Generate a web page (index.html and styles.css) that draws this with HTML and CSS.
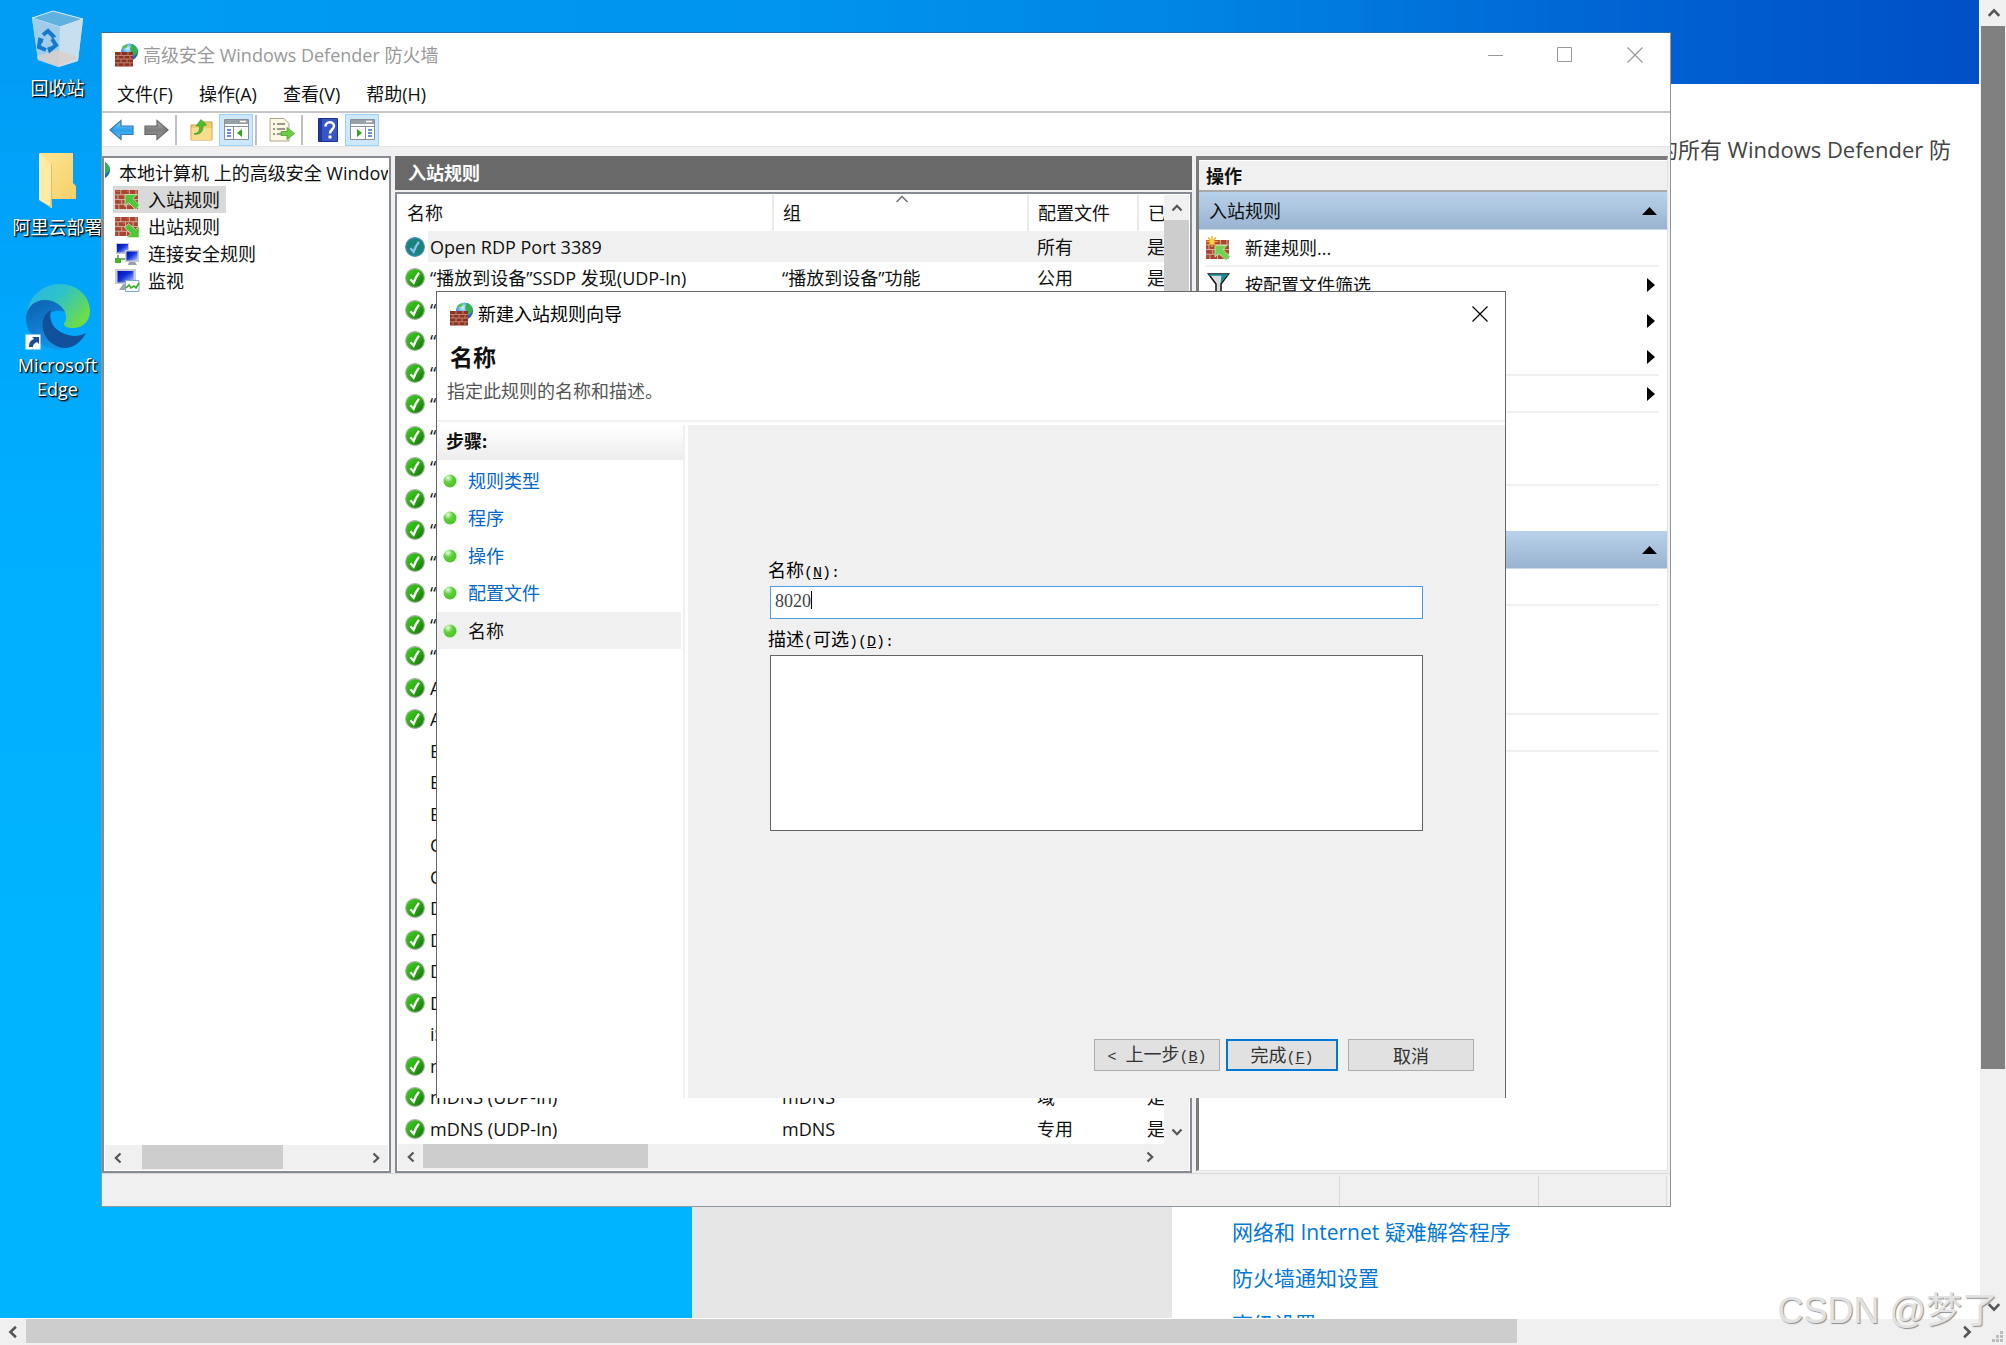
FILE: index.html
```html
<!DOCTYPE html>
<html lang="zh-CN">
<head>
<meta charset="utf-8">
<title>高级安全 Windows Defender 防火墙</title>
<link rel="stylesheet" href="styles.css">
</head>
<body>
<svg class="defs" width="0" height="0" aria-hidden="true">
  <defs>
    <linearGradient id="g-green" x1="0" y1="0" x2="1" y2="1"><stop offset="0" stop-color="#3ed321"/><stop offset=".5" stop-color="#2cab14"/><stop offset="1" stop-color="#0d6a05"/></linearGradient>
    <radialGradient id="g-globe" cx=".4" cy=".3" r=".8"><stop offset="0" stop-color="#d8f4ff"/><stop offset=".4" stop-color="#4aa5ea"/><stop offset="1" stop-color="#0a3fa8"/></radialGradient>
    <radialGradient id="g-dot" cx=".35" cy=".25" r=".8"><stop offset="0" stop-color="#e8ffe0"/><stop offset=".45" stop-color="#5fd03a"/><stop offset="1" stop-color="#4cc22a"/></radialGradient>
    <linearGradient id="g-blue" x1="0" y1="0" x2="0" y2="1"><stop offset="0" stop-color="#8fd4f8"/><stop offset=".5" stop-color="#2ba0ea"/><stop offset="1" stop-color="#5cc0f4"/></linearGradient>
    <linearGradient id="g-gray" x1="0" y1="0" x2="0" y2="1"><stop offset="0" stop-color="#b4b4b4"/><stop offset=".5" stop-color="#7c7c7c"/><stop offset="1" stop-color="#9a9a9a"/></linearGradient>
    <linearGradient id="g-screen" x1="0" y1="0" x2="1" y2="1"><stop offset="0" stop-color="#0010b0"/><stop offset=".45" stop-color="#1030d8"/><stop offset="1" stop-color="#b8d0ff"/></linearGradient>
    <linearGradient id="g-folder" x1="0" y1="0" x2="1" y2="1"><stop offset="0" stop-color="#ffe594"/><stop offset="1" stop-color="#f5cf68"/></linearGradient>
    <linearGradient id="g-e1" x1="0" y1="0" x2="1" y2=".6"><stop offset="0" stop-color="#2fb4ea"/><stop offset=".5" stop-color="#2cc3c8"/><stop offset="1" stop-color="#6ddc4a"/></linearGradient>
    <linearGradient id="g-e2" x1="0" y1="0" x2=".4" y2="1"><stop offset="0" stop-color="#0c5fae"/><stop offset="1" stop-color="#1490e4"/></linearGradient>
    <symbol id="check" viewBox="0 0 20 20"><circle cx="10" cy="10" r="9.4" fill="url(#g-green)" stroke="#a9b0a6" stroke-width="1.1"/><path d="M5.4 11.2 8.6 14.8C10 10.800 11.600 7.800 14 4.800" fill="none" stroke="#fff" stroke-width="2.300"/></symbol>
    <symbol id="check-sel" viewBox="0 0 20 20"><circle cx="10" cy="10" r="9.4" fill="#1b837c" stroke="#4d8fc0" stroke-width="1.1"/><path d="M5.4 11.2 8.6 14.8C10 10.800 11.600 7.800 14 4.800" fill="none" stroke="#86c2ee" stroke-width="2.300"/></symbol>
    <symbol id="bricks" viewBox="0 0 24 20"><path fill="#a8452f" d="M0 0h24v20H0z"/><path d="M0 5h24M0 10h24M0 15h24M6 0v5M15 0v5M22 0v5M3 5v5M11 5v5M19 5v5M7 10v5M15 10v5M4 15v5M12 15v5M20 15v5" stroke="#d9b3a3" stroke-width="1" fill="none"/><path d="M1 1.500h4M8 6.500h3M12 1.500h2M4 11.500h3M13 16.500h3" stroke="#c96b50" fill="none"/></symbol>
    <symbol id="firewall" viewBox="0 0 24 24"><circle cx="14.500" cy="9" r="8.600" fill="url(#g-globe)"/><path d="M17 1c3 1 5 3 5.800 7.500-1 2-3 4.500-5 3.500s-1-3-2-4-.5-4 1.200-7z" fill="#35b04a"/><path d="M7 4c2-2 4-2.500 6-2.500l-1 3-4 1z" fill="#57c25c"/><path fill="#8a3322" d="M0 9h18v14.500H0z"/><path d="M0 12.500h18M0 16h18M0 19.800h18M6 9v3.500M13 9v3.500M3 12.500V16M9 12.500V16M15 12.500V16M6 16v3.800M12 16v3.800M3 19.800v3.700M9 19.800v3.700M15 19.800v3.700" stroke="#c98a75" stroke-width=".9" fill="none"/></symbol>
    <symbol id="in" viewBox="0 0 25 22"><use href="#bricks" x="0" y="1" width="23" height="19"/><path d="M10 5.500h12l-4 4 6.500 6.500-4 4.500-7-7-3.500 4z" fill="#52c437" stroke="#d7f2cf" stroke-width=".7"/></symbol>
    <symbol id="out" viewBox="0 0 25 22"><use href="#bricks" x="0" y="1" width="23" height="19"/><path d="M24 21.500H12l4-4-6.500-5.500 4-4.500 7 6 3.500-3.500z" fill="#52c437" stroke="#d7f2cf" stroke-width=".7"/></symbol>
    <symbol id="conn" viewBox="0 0 25 24"><path d="M1 1h13v11H1z" fill="#c9cdd2"/><path d="M2 2h11v8.500H2z" fill="url(#g-screen)"/><path d="M10 8h14v12H10z" fill="#c9cdd2"/><path d="M11.500 9.500h11v9h-11z" fill="url(#g-screen)"/><path d="M14 20h6l2 3h-9z" fill="#9ba0a5"/><path d="M3 13v4h7" fill="none" stroke="#777" stroke-width="1.500"/><path d="M0 16h6v5H0z" fill="#43b52c"/></symbol>
    <symbol id="mon" viewBox="0 0 25 24"><path d="M0 0h21v15H0z" fill="#c9cdd2"/><path d="M2.500 2h16v11.500h-16z" fill="url(#g-screen)"/><path d="M8 15h5v4h3v2H4z" fill="#a2a7ac"/><path d="M10.500 11.500h13.500v11H10.500z" fill="#fff" stroke="#7fa6cf"/><path d="M11 19l3-3 2 3 3-2 2 2 3-5" fill="none" stroke="#3aa82a" stroke-width="1.600"/></symbol>
    <symbol id="newrule" viewBox="0 0 25 24"><use href="#bricks" x="0" y="4" width="23" height="19"/><path d="M9 9.500h12l-4 4 7 7-4 4-7-7-4 3.500z" fill="#6fd350" stroke="#d7f2cf" stroke-width=".7"/><path d="M6 0v11M.5 5.500h11M2 1.500l8 8M10 1.500l-8 8" stroke="#f5a623" stroke-width="1.400"/><circle cx="6" cy="5.500" r="2.600" fill="#ffcf4a"/></symbol>
    <symbol id="funnel" viewBox="0 0 22 24"><path d="M1 1h20l-7.500 10v10l-5 2V11z" fill="#d9dcdc" stroke="#111" stroke-width="1.500"/><path d="M14 2h5.500L13 10.500z" fill="#0c8f96"/><path d="M1.500 2h19" stroke="#0c8f96" stroke-width="1.500"/></symbol>
    <symbol id="cleft" viewBox="0 0 12 12"><path d="M8.500 1.500 3.800 6l4.700 4.500" fill="none" stroke="#555" stroke-width="2.200"/></symbol>
    <symbol id="cright" viewBox="0 0 12 12"><path d="M3.500 1.500 8.200 6l-4.700 4.500" fill="none" stroke="#555" stroke-width="2.200"/></symbol>
    <symbol id="cup" viewBox="0 0 12 12"><path d="M1.500 8.500 6 3.800l4.500 4.700" fill="none" stroke="#555" stroke-width="2.200"/></symbol>
    <symbol id="cdown" viewBox="0 0 12 12"><path d="M1.500 3.500 6 8.200l4.500-4.700" fill="none" stroke="#555" stroke-width="2.200"/></symbol>
    <symbol id="close" viewBox="0 0 16 16"><path d="M.5.500l15 15M15.500.500l-15 15" fill="none" stroke="currentColor" stroke-width="1.200"/></symbol>
    <symbol id="tri-up" viewBox="0 0 15 8"><path d="M7.500 0 15 8H0z"/></symbol>
    <symbol id="tri-right" viewBox="0 0 8 14"><path d="M0 0l8 7-8 7z"/></symbol>
    <symbol id="dot" viewBox="0 0 14 14"><circle cx="7" cy="7" r="6.500" fill="url(#g-dot)"/></symbol>
  </defs>
</svg>

<div class="viewer">
  <main class="desktop">
    <section class="settings">
      <div class="settings-nav"></div>
      <div class="settings-main">
        <p class="settings-note">的所有 Windows Defender 防</p>
        <nav class="settings-links">
          <a href="#net">网络和 Internet 疑难解答程序</a>
          <a href="#notify">防火墙通知设置</a>
          <a href="#advanced">高级设置</a>
        </nav>
      </div>
    </section>

    <ul class="shortcuts">
      <li>
        <svg width="54" height="60" viewBox="0 0 54 60"><path d="M1 8 22 1l30 8-5 42-20 6-20-7z" fill="#b9d9ee"/><path d="M1 8 22 1l30 8-23 8z" fill="#5fb2df" stroke="#d6ecf8"/><path d="M1 8l28 9-1 40-21-7z" fill="#9fcde9"/><path d="M29 17 52 9l-5 42-19 6z" fill="#c7dfee"/><path d="M6 46l20-6 21 7-19 9.500-21-7z" fill="#dccfcb" opacity=".8"/><path d="M12 25l5-4 5 5-2 1M21 29l4 6-6 5-1-3M15 40l-7-3 1-7 3 1" fill="none" stroke="#1478cf" stroke-width="4"/></svg>
        <span>回收站</span>
      </li>
      <li>
        <svg width="38" height="56" viewBox="0 0 38 56"><path d="M1 0h33v30l3 3v13H1z" fill="url(#g-folder)"/><path d="M0 0l12 11v28l1 16L0 47z" fill="#ffeaa6"/><path d="M12.500 11v32l-1 12" fill="none" stroke="#e3bd58"/></svg>
        <span>阿里云部署</span>
      </li>
      <li>
        <svg width="66" height="66" viewBox="0 0 66 66"><path d="M1 33C3 12 18 0 35 0c18 0 30 13 30 27 0 11-8 17-17 17-5 0-9-1-9-4 0-2 3-3 2-8-1-8-9-15-20-15C10 17 3 24 1 33z" fill="url(#g-e1)"/><path d="M1 34c0-10 8-18 19-18 10 0 17 6 20 12-14-5-23 6-19 18 3 11 11 18 20 19-22 3-40-12-40-31z" fill="url(#g-e2)"/><path d="M26 26c-12 6-11 26 2 34 11 8 25 4 33-11-9 5-20 3-27-2-8-5-10-14-8-21z" fill="#11509a"/><path d="M.5 50.500h15v15H.5z" fill="#fff"/><path d="M4 63c0-5 2-7 5-8l-2-2h7v7l-2-2c-3 1-4 3-4 5z" fill="#1c4f91"/></svg>
        <span>Microsoft<br>Edge</span>
      </li>
    </ul>

    <section class="window">
      <header class="titlebar">
        <svg width="24" height="24"><use href="#firewall"/></svg>
        <h1>高级安全 Windows Defender 防火墙</h1>
        <button class="winbtn" aria-label="最小化"><svg width="16" height="16"><path d="M1 8.500h15" stroke="#999"/></svg></button>
        <button class="winbtn" aria-label="最大化"><svg width="16" height="16"><path d="M.5.500h14v14H.5z" fill="none" stroke="#999"/></svg></button>
        <button class="winbtn" aria-label="关闭"><svg width="16" height="16"><use href="#close"/></svg></button>
      </header>
      <nav class="menubar">
        <button>文件(F)</button><button>操作(A)</button><button>查看(V)</button><button>帮助(H)</button>
      </nav>
      <div class="toolbar">
        <button aria-label="后退"><svg width="26" height="22" viewBox="0 0 26 22"><path d="M1 11 12 1.500V7h12v8.500H12V20.500z" fill="url(#g-blue)" stroke="#3878b4" stroke-width="1.200"/></svg></button>
        <button aria-label="前进"><svg width="26" height="22" viewBox="0 0 26 22"><path d="M25 11 14 1.500V7H2v8.500h12V20.500z" fill="url(#g-gray)" stroke="#666" stroke-width="1.200"/></svg></button>
        <i></i>
        <button aria-label="向上一级"><svg width="24" height="24" viewBox="0 0 24 24"><path d="M1 7h8l2-3h11v18H1z" fill="#f3cc6b" stroke="#c9a04a"/><path d="M1.500 10h20v12h-20z" fill="#f9dc8c"/><path d="M4 16c5-1 6-4 5.500-8H6l5-6.500L16.500 7 13 8c0 6-3 9-9 8z" fill="#4cc02f" stroke="#2d8a1a" stroke-width=".6"/></svg></button>
        <button class="on" aria-label="显示控制台树"><svg width="25" height="21" viewBox="0 0 25 21"><path d="M.5.500h24v20H.5z" fill="#fff" stroke="#8a8f96"/><path d="M1 1h23v4H1z" fill="#9aa0a8"/><path d="M16 2.500h6" stroke="#fff" stroke-width="1.500"/><path d="M1 7.500h23M9.500 8v12" stroke="#8a8f96"/><path d="M3 11h4M3 14h4M3 17h4" stroke="#3a6ec0" stroke-width="1.500"/><path d="M18 10v8l-5-4z" fill="#2fa51c"/></svg></button>
        <i></i>
        <button aria-label="导出列表"><svg width="26" height="24" viewBox="0 0 26 24"><path d="M1 .5h14l5 5V23H1z" fill="#fdf8e2" stroke="#aaa48c"/><path d="M4 6h2M4 11h2M4 16h2M8 6h8M8 11h8M8 16h6" stroke="#777" stroke-width="1.500"/><path d="M12 13.500h6V9.500l7.500 6-7.500 6v-4h-6z" fill="#6bd048" stroke="#3c9a22" stroke-width=".7"/></svg></button>
        <i></i>
        <button aria-label="帮助"><svg width="20" height="24" viewBox="0 0 20 24"><path d="M.5.500h19v23H.5z" fill="#3556c4" stroke="#1d2f86"/><path d="M1 1h3v22H1z" fill="#1f389c"/><path d="M7.500 8.500C7.500 3 16 3 16 8c0 3.500-4 3.500-4 7.500" fill="none" stroke="#fff" stroke-width="2.500"/><path d="M10.500 17.500h3v3h-3z" fill="#fff"/></svg></button>
        <button class="on" aria-label="显示操作窗格"><svg width="25" height="21" viewBox="0 0 25 21"><path d="M.5.500h24v20H.5z" fill="#fff" stroke="#8a8f96"/><path d="M1 1h23v4H1z" fill="#9aa0a8"/><path d="M16 2.500h6" stroke="#fff" stroke-width="1.500"/><path d="M1 7.500h23M15.500 8v12" stroke="#8a8f96"/><path d="M18 11h4M18 14h4M18 17h4" stroke="#3a6ec0" stroke-width="1.500"/><path d="M7 10v8l5-4z" fill="#2fa51c"/></svg></button>
      </div>

      <div class="panes">
        <section class="pane tree">
          <ul>
            <li class="root"><svg width="6" height="24" viewBox="18 0 6 24"><use href="#firewall" width="24" height="24"/></svg><span>本地计算机 上的高级安全 Windows Defender 防火墙</span></li>
            <li class="node sel"><svg width="25" height="22"><use href="#in"/></svg><span>入站规则</span></li>
            <li class="node"><svg width="25" height="22"><use href="#out"/></svg><span>出站规则</span></li>
            <li class="node"><svg width="25" height="24"><use href="#conn"/></svg><span>连接安全规则</span></li>
            <li class="node"><svg width="25" height="24"><use href="#mon"/></svg><span>监视</span></li>
          </ul>
          <div class="hscroll tree-scroll">
            <button aria-label="向左"><svg width="12" height="12"><use href="#cleft"/></svg></button>
            <div class="track"><div class="thumb"></div></div>
            <button aria-label="向右"><svg width="12" height="12"><use href="#cright"/></svg></button>
          </div>
        </section>

        <section class="center">
          <h2 class="darkhead">入站规则</h2>
          <div class="pane list">
            <div class="tablewrap">
              <table>
                <colgroup><col class="c1"><col class="c2"><col class="c3"><col class="c4"></colgroup>
                <thead><tr><th>名称</th><th>组<svg class="sort" width="14" height="8" viewBox="0 0 14 8"><path d="M1.500 7 7 1.500 12.500 7" fill="none" stroke="#777" stroke-width="1.600"/></svg></th><th>配置文件</th><th>已启用</th></tr></thead>
                <tbody>
                  <tr class="sel"><td><svg><use href="#check-sel"/></svg>Open RDP Port 3389</td><td></td><td>所有</td><td>是</td></tr>
                  <tr><td><svg><use href="#check"/></svg>“播放到设备”SSDP 发现(UDP-In)</td><td>“播放到设备”功能</td><td>公用</td><td>是</td></tr>
                  <tr><td><svg><use href="#check"/></svg>“</td><td></td><td></td><td></td></tr>
                  <tr><td><svg><use href="#check"/></svg>“</td><td></td><td></td><td></td></tr>
                  <tr><td><svg><use href="#check"/></svg>“</td><td></td><td></td><td></td></tr>
                  <tr><td><svg><use href="#check"/></svg>“</td><td></td><td></td><td></td></tr>
                  <tr><td><svg><use href="#check"/></svg>“</td><td></td><td></td><td></td></tr>
                  <tr><td><svg><use href="#check"/></svg>“</td><td></td><td></td><td></td></tr>
                  <tr><td><svg><use href="#check"/></svg>“</td><td></td><td></td><td></td></tr>
                  <tr><td><svg><use href="#check"/></svg>“</td><td></td><td></td><td></td></tr>
                  <tr><td><svg><use href="#check"/></svg>“</td><td></td><td></td><td></td></tr>
                  <tr><td><svg><use href="#check"/></svg>“</td><td></td><td></td><td></td></tr>
                  <tr><td><svg><use href="#check"/></svg>“</td><td></td><td></td><td></td></tr>
                  <tr><td><svg><use href="#check"/></svg>“</td><td></td><td></td><td></td></tr>
                  <tr><td><svg><use href="#check"/></svg>A</td><td></td><td></td><td></td></tr>
                  <tr><td><svg><use href="#check"/></svg>A</td><td></td><td></td><td></td></tr>
                  <tr><td><svg></svg>B</td><td></td><td></td><td></td></tr>
                  <tr><td><svg></svg>B</td><td></td><td></td><td></td></tr>
                  <tr><td><svg></svg>B</td><td></td><td></td><td></td></tr>
                  <tr><td><svg></svg>C</td><td></td><td></td><td></td></tr>
                  <tr><td><svg></svg>C</td><td></td><td></td><td></td></tr>
                  <tr><td><svg><use href="#check"/></svg>D</td><td></td><td></td><td></td></tr>
                  <tr><td><svg><use href="#check"/></svg>D</td><td></td><td></td><td></td></tr>
                  <tr><td><svg><use href="#check"/></svg>D</td><td></td><td></td><td></td></tr>
                  <tr><td><svg><use href="#check"/></svg>D</td><td></td><td></td><td></td></tr>
                  <tr><td><svg></svg>iS</td><td></td><td></td><td></td></tr>
                  <tr><td><svg><use href="#check"/></svg>m</td><td></td><td></td><td></td></tr>
                  <tr><td><svg><use href="#check"/></svg>mDNS (UDP-In)</td><td>mDNS</td><td>域</td><td>是</td></tr>
                  <tr><td><svg><use href="#check"/></svg>mDNS (UDP-In)</td><td>mDNS</td><td>专用</td><td>是</td></tr>
                </tbody>
              </table>
            </div>
            <div class="vscroll">
              <button aria-label="向上"><svg width="12" height="12"><use href="#cup"/></svg></button>
              <div class="track"><div class="thumb"></div></div>
              <button aria-label="向下"><svg width="12" height="12"><use href="#cdown"/></svg></button>
            </div>
            <div class="hscroll list-scroll">
              <button aria-label="向左"><svg width="12" height="12"><use href="#cleft"/></svg></button>
              <div class="track"><div class="thumb"></div></div>
              <button aria-label="向右"><svg width="12" height="12"><use href="#cright"/></svg></button>
              <span></span>
            </div>
          </div>
        </section>

        <aside class="actions">
          <h2>操作</h2>
          <h3><span>入站规则</span><svg width="15" height="8"><use href="#tri-up"/></svg></h3>
          <ul>
            <li class="rule"><svg width="25" height="24"><use href="#newrule"/></svg><span>新建规则...</span></li>
            <li><svg width="25" height="24"><use href="#funnel"/></svg><span>按配置文件筛选</span><svg width="8" height="14"><use href="#tri-right"/></svg></li>
            <li><span></span><svg width="8" height="14"><use href="#tri-right"/></svg></li>
            <li class="rule"><span></span><svg width="8" height="14"><use href="#tri-right"/></svg></li>
            <li class="rule"><span></span><svg width="8" height="14"><use href="#tri-right"/></svg></li>
            <li></li>
            <li class="rule"></li>
            <li></li>
          </ul>
          <h3 class="second"><span></span><svg width="15" height="8"><use href="#tri-up"/></svg></h3>
          <ul>
            <li class="rule"></li>
            <li></li>
            <li></li>
            <li class="rule"></li>
            <li class="rule"></li>
          </ul>
        </aside>
      </div>
      <footer class="status"><span></span><span></span><span></span></footer>
    </section>

    <section class="dialog" role="dialog" aria-labelledby="dlg-title">
      <header class="dlg-title">
        <svg width="24" height="24"><use href="#firewall"/></svg>
        <h2 id="dlg-title">新建入站规则向导</h2>
        <button aria-label="关闭"><svg width="16" height="16"><use href="#close"/></svg></button>
      </header>
      <div class="dlg-head">
        <h3>名称</h3>
        <p>指定此规则的名称和描述。</p>
      </div>
      <div class="dlg-body">
        <nav class="steps">
          <h4>步骤:</h4>
          <ol>
            <li><svg width="14" height="14"><use href="#dot"/></svg><a href="#type">规则类型</a></li>
            <li><svg width="14" height="14"><use href="#dot"/></svg><a href="#program">程序</a></li>
            <li><svg width="14" height="14"><use href="#dot"/></svg><a href="#action">操作</a></li>
            <li><svg width="14" height="14"><use href="#dot"/></svg><a href="#profile">配置文件</a></li>
            <li class="current"><svg width="14" height="14"><use href="#dot"/></svg><span>名称</span></li>
          </ol>
        </nav>
        <form class="form">
          <div class="fields">
            <label for="name">名称<kbd>(<u>N</u>):</kbd></label>
            <div class="field"><input id="name" type="text" value="8020"><b class="caret"></b></div>
            <label for="desc">描述<kbd>(</kbd>可选<kbd>)(<u>D</u>):</kbd></label>
            <textarea id="desc"></textarea>
          </div>
          <div class="buttons">
            <button type="button"><kbd>&lt; </kbd>上一步<kbd>(<u>B</u>)</kbd></button>
            <button type="button" class="default">完成<kbd>(<u>F</u>)</kbd></button>
            <button type="button" class="cancel">取消</button>
          </div>
        </form>
      </div>
    </section>
  </main>

  <div class="vscroll outer-v">
    <button aria-label="向上"><svg width="14" height="14"><use href="#cup"/></svg></button>
    <div class="track"><div class="thumb"></div></div>
    <button aria-label="向下"><svg width="14" height="14"><use href="#cdown"/></svg></button>
  </div>
  <div class="hscroll outer-h">
    <button aria-label="向左"><svg width="14" height="14"><use href="#cleft"/></svg></button>
    <div class="track"><div class="thumb"></div></div>
    <button aria-label="向右"><svg width="14" height="14"><use href="#cright"/></svg></button>
  </div>
  <div class="corner"><svg width="12" height="12" viewBox="0 0 12 12"><path d="M8 0h3v3H8zM4 4h3v3H4zM8 4h3v3H8zM0 8h3v3H0zM4 8h3v3H4zM8 8h3v3H8z" fill="#bbb"/></svg></div>
  <div class="watermark">CSDN @梦了</div>
</div>
</body>
</html>
```
FILE: styles.css
```css
* { box-sizing: border-box; }
body, h1, h2, h3, h4, p, ul, ol { margin: 0; padding: 0; }
ul, ol { list-style: none; }
body {
  font: 18px/24px "Open Sans", "Noto Sans CJK SC", sans-serif;
  color: #111;
  overflow: hidden;
}
button, input, textarea { font: inherit; color: inherit; margin: 0; }
button { background: none; border: 0; padding: 0; }
svg { display: block; flex: none; }
.defs { position: absolute; }
a { text-decoration: none; }
kbd { font-family: "Liberation Mono", monospace; font-size: 15px; }

/* remote viewer frame */
.viewer {
  position: relative;
  display: grid;
  grid-template: minmax(0, 1fr) 26px / minmax(0, 1fr) 26px;
  height: 100vh;
}
.desktop {
  position: relative;
  overflow: hidden;
  border-right: 1px solid #fff;
  border-bottom: 1px solid #fff;
  background:
    linear-gradient(to right, #009df4, #0094ee 40%, #0085e4 60%, #0062d2 83%, #004fc6) top / 100% 84px no-repeat,
    linear-gradient(to bottom, #009ef6 84px, #00aeff 40%, #00b4ff 70%);
}

/* scroll bars */
.vscroll, .hscroll { display: flex; background: #f0f0f0; }
.vscroll { flex-direction: column; }
.vscroll button, .hscroll button { display: grid; place-items: center; flex: none; width: 25px; height: 25px; }
.track { flex: 1; }
.thumb { background: #cdcdcd; }
.hscroll .thumb { height: 24px; }
.outer-v { padding-left: 1px; }
.outer-v .thumb { width: 24px; height: calc(83% - 10px); background: #808080; margin-top: 1px; }
.outer-h { padding-right: 1px; }
.outer-h .thumb { width: calc(77% + 6px); margin-left: 1px; }
.corner { background: #f0f0f0; display: grid; place-items: end; padding: 2px; }
.watermark {
  position: absolute;
  right: 8px;
  bottom: 12px;
  font: 36px/44px "Liberation Sans", "Noto Sans CJK SC", sans-serif;
  color: #e2e2e2;
  text-shadow: 1px 1px 1px #8c8c8c;
}

/* settings window in the background */
.settings {
  position: absolute;
  left: 692px;
  right: 0;
  top: 84px;
  bottom: 0;
  display: grid;
  grid-template-columns: 480px 1fr;
  background: #fff;
}
.settings-nav { background: #e6e6e6; }
.settings-main { display: flex; flex-direction: column; justify-content: space-between; padding: 50px 28px 0 60px; }
.settings-note { font-size: 22px; line-height: 30px; text-align: right; color: #444; }
.settings-links { display: grid; font-size: 21px; line-height: 46px; margin-bottom: -29px; }
.settings-links a { color: #0078d7; }

/* desktop icons */
.shortcuts { position: absolute; left: 0; top: 10px; width: 115px; display: grid; gap: 39px; color: #fff; text-align: center; }
.shortcuts li { display: flex; flex-direction: column; align-items: center; justify-content: flex-end; gap: 6px; min-height: 100px; white-space: nowrap; text-shadow: 1px 1px 2px #000, 1px 1px 1px #000; }
.shortcuts li:first-child { min-height: 0; }
.shortcuts li:last-child { gap: 3px; padding-top: 6px; }

/* firewall console */
.window { position: absolute; left: 101px; right: 308px; top: 32px; border: 1px solid #8f979d; border-top-color: #2b6ea4; background: #fff; }
.titlebar { display: flex; align-items: center; height: 43px; padding-left: 13px; gap: 4px; color: #999; }
.titlebar h1 { flex: 1; font-size: 18px; font-weight: 400; line-height: 24px; }
.winbtn { display: grid; place-items: center; width: 70px; height: 43px; margin-left: -4px; }
.menubar { display: flex; gap: 26px; height: 37px; padding: 0 15px; border-bottom: 2px solid #c4c5c8; }
.toolbar { display: flex; align-items: center; height: 34px; padding-left: 3px; border-bottom: 1px solid #e5e5e5; }
.toolbar button { display: grid; place-items: center; width: 34px; height: 32px; }
.toolbar .on { background: #cce8ff; border: 1px solid #99d1ff; }
.toolbar i { width: 2px; height: 30px; margin: 0 8px 0 2px; background: #bfbfbf; }

.panes { display: grid; grid-template-columns: 289px minmax(0, 1fr) 472px; gap: 4px; padding: 9px 2px 0 0; background: #f0f0f0; }
.pane { border: 2px solid #868b93; padding: 1px; background: #fff; }
.tree { display: flex; flex-direction: column; justify-content: space-between; overflow: hidden; }
.tree li { display: flex; align-items: center; height: 27px; white-space: nowrap; }
.root { gap: 8px; overflow: hidden; }
.node { margin-left: 8px; padding: 0 6px 0 2px; gap: 8px; width: max-content; }
.sel.node { background: #d9d9d9; }
.tree-scroll .thumb { width: 141px; margin-left: 12px; }

.center { display: flex; flex-direction: column; gap: 2px; }
.darkhead { height: 34px; padding-left: 13px; background: #696969; color: #fff; font-size: 18px; line-height: 34px; }
.list { display: grid; grid-template-columns: minmax(0, 1fr) 25px; }
.tablewrap { overflow: hidden; }
table { width: 100%; table-layout: fixed; border-collapse: collapse; text-align: left; }
.c1 { width: 375px; }
.c2 { width: 255px; }
.c3 { width: 110px; }
th, td { padding: 0 0 0 9px; font-weight: 400; white-space: nowrap; overflow: hidden; }
th { position: relative; height: 36px; border-right: 2px solid #e9e9e9; }
th:last-child { border-right: 0; }
.sort { position: absolute; left: 121px; top: 0; }
tbody tr { height: 31px; }
tbody tr:nth-child(even) { height: 32px; }
td svg { float: left; width: 20px; height: 20px; margin: 2px 5px 0 -2px; }
tbody .sel { background: linear-gradient(to right, transparent 30px, #f0f0f0 30px); }
.list .vscroll .thumb { height: 500px; }
.list-scroll { grid-column: 1 / -1; height: 26px; }
.list-scroll .thumb { width: 225px; }
.list-scroll span { width: 27px; }

.actions { border: 3px solid #7b7b7b; border-width: 4px 1px 1px 3px; border-right-color: #e3e3e3; border-bottom-color: #e3e3e3; background: #fff; margin-bottom: 2px; }
.actions h2 { height: 32px; padding-left: 7px; border-top: 1px solid #fff; border-bottom: 2px solid #a9a9a9; background: #f0f0f0; font-size: 18px; line-height: 30px; }
.actions h3 { display: flex; align-items: center; justify-content: space-between; height: 38px; padding: 0 10px; border-bottom: 1px solid #c9d8e8; background: linear-gradient(#b9d1ea, #99b4d1); font-size: 18px; font-weight: 400; }
.actions ul { padding: 0 8px 0 7px; }
.actions li { display: flex; align-items: center; gap: 14px; height: 36px; padding-right: 4px; }
.actions li.rule { height: 37px; border-bottom: 2px solid #f0f0f0; }
.actions li span { flex: 1; }
.actions .second { margin-top: 9px; }

.status { display: flex; justify-content: flex-end; height: 33px; padding-top: 2px; border-top: 1px solid #d9d9d9; background: #f0f0f0; }
.status span { border-right: 1px solid #d9d9d9; }
.status span:nth-child(1) { flex: 1; }
.status span:nth-child(2) { width: 199px; }
.status span:nth-child(3) { width: 128px; margin-right: 3px; }

/* new rule wizard */
.dialog { position: absolute; left: 436px; top: 291px; width: 1070px; background: #fff; border: 1px solid #666; border-bottom: 0; }
.dlg-title { display: flex; align-items: center; gap: 4px; height: 44px; padding-left: 13px; color: #000; }
.dlg-title h2 { flex: 1; font-size: 18px; font-weight: 400; }
.dlg-title button { display: grid; place-items: center; width: 51px; height: 44px; }
.dlg-head { height: 86px; padding: 7px 10px; border-bottom: 2px solid #f0f0f0; }
.dlg-head h3 { padding-left: 3px; font-size: 23px; line-height: 28px; }
.dlg-head p { margin-top: 8px; color: #555; }
.dlg-body { display: grid; grid-template-columns: 248px minmax(0, 1fr); gap: 3px; padding-top: 3px; }
.steps { border-right: 2px solid #f0f0f0; }
.steps h4 { height: 35px; padding-left: 9px; background: linear-gradient(#fff, #ededed); font-size: 18px; line-height: 33px; }
.steps ol { padding: 2px 2px 0 0; }
.steps li { display: flex; align-items: center; gap: 11px; height: 37px; padding-left: 6px; }
.steps li:nth-child(even) { height: 38px; }
.steps a { color: #0066cc; }
.steps .current { background: #f0f0f0; }
.form { display: flex; flex-direction: column; justify-content: space-between; min-height: 673px; padding: 133px 31px 27px 82px; background: #f0f0f0; }
.fields { display: grid; padding-right: 51px; }
.fields label { height: 28px; line-height: 25px; margin-left: -2px; color: #000; }
.fields .field { position: relative; margin-bottom: 8px; }
.fields input { width: 100%; height: 33px; padding: 0 4px 3px; border: 1px solid #4aa0e6; background: #fff; color: #444; font-family: "Liberation Serif", serif; outline: 0; display: block; }
.caret { position: absolute; left: 41px; top: 5px; width: 1px; height: 18px; background: #000; }
.fields textarea { display: block; height: 176px; border: 1px solid #646464; background: #fff; resize: none; outline: 0; }
.buttons { display: flex; justify-content: flex-end; gap: 6px; color: #333; }
.buttons button { width: 126px; height: 32px; padding-top: 2px; border: 1px solid #adadad; background: #e1e1e1; }
.buttons .default { width: 112px; border: 2px solid #0078d7; }
.buttons .cancel { margin-left: 4px; }
```
